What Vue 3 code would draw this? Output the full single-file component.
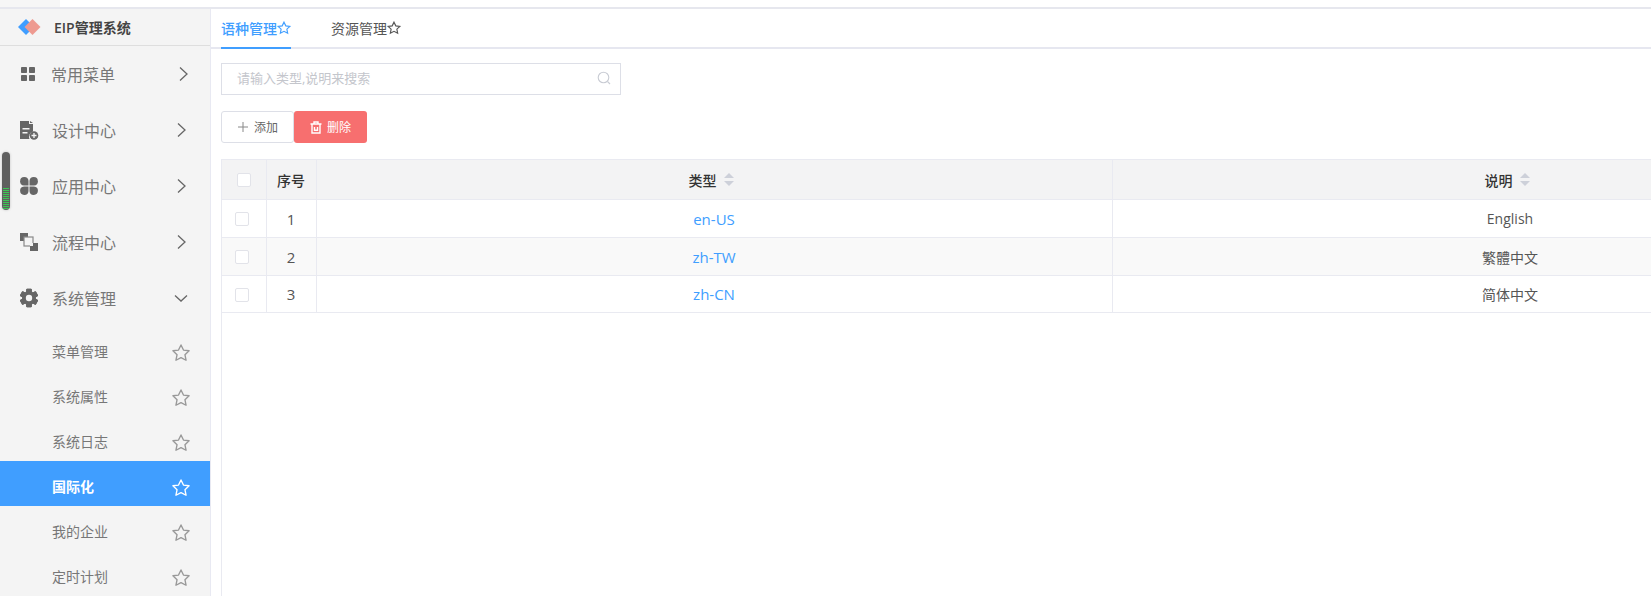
<script setup>
const menus = [
  { label: '常用菜单', icon: 'grid', open: false },
  { label: '设计中心', icon: 'doc', open: false },
  { label: '应用中心', icon: 'clover', open: false },
  { label: '流程中心', icon: 'flow', open: false },
  { label: '系统管理', icon: 'gear', open: true },
]
const subs = [
  { label: '菜单管理' }, { label: '系统属性' }, { label: '系统日志' },
  { label: '国际化', active: true }, { label: '我的企业' }, { label: '定时计划' },
]
const rows = [
  { n: 1, type: 'en-US', desc: 'English' },
  { n: 2, type: 'zh-TW', desc: '繁體中文' },
  { n: 3, type: 'zh-CN', desc: '简体中文' },
]
const star = 'M12 3.2l2.7 5.6 6.1.8-4.5 4.2 1.2 6.1L12 17l-5.5 2.9 1.2-6.1-4.5-4.2 6.1-.8z'
const teeth = [0, 60, 120, 180, 240, 300]
</script>

<template>
  <div class="page">
    <div class="topbar"><div class="topbar-left"></div></div>
    <div class="body">
      <aside class="side">
        <div class="logo">
          <svg class="logo-mark" width="24" height="18" viewBox="0 0 24 18">
            <path d="M9 1l8 8-8 8-8-8z" fill="#409eff" />
            <path d="M15.500 1l8 8-8 8-8-8z" fill="#ee9a90" />
          </svg>
          <span class="logo-text">EIP管理系统</span>
        </div>
        <div v-for="(m, i) in menus" :key="m.label" class="menu" :class="{ first: i === 0 }">
          <span class="menu-icon">
            <svg v-if="m.icon === 'grid'" width="18" height="18" viewBox="0 0 18 18" fill="#666">
              <rect x="2" y="2" width="6" height="6" rx=".8" /><rect x="10" y="2" width="6" height="6" rx=".8" />
              <rect x="2" y="10" width="6" height="6" rx=".8" /><rect x="10" y="10" width="6" height="6" rx=".8" />
            </svg>
            <svg v-else-if="m.icon === 'doc'" width="20" height="20" viewBox="0 0 20 20" fill="#666">
              <path d="M1 1h9v3h4v7.500a5.500 5.500 0 0 0-3.500 7.500H1z" />
              <path d="M11 1l3 2h-3z" />
              <rect x="3.500" y="8" width="7" height="1.500" fill="#f4f4f4" /><rect x="3.500" y="12" width="5" height="1.500" fill="#f4f4f4" />
              <circle cx="15" cy="15.500" r="4.300" /><path d="M15 13v5M12.500 15.500h5" stroke="#f4f4f4" stroke-width="1.300" />
            </svg>
            <svg v-else-if="m.icon === 'clover'" width="20" height="20" viewBox="0 0 20 20" fill="#666">
              <path d="M9.500 9.500H5a4.200 4.200 0 1 1 4.500-4.500z" />
              <path d="M10.500 9.500H15a4.200 4.200 0 1 0-4.500-4.500z" />
              <path d="M9.500 10.500H5a4.200 4.200 0 1 0 4.500 4.500z" />
              <path d="M10.500 10.500H15a4.200 4.200 0 1 1-4.500 4.500z" />
            </svg>
            <svg v-else-if="m.icon === 'flow'" width="20" height="20" viewBox="0 0 20 20">
              <rect x="1" y="1" width="8" height="8" fill="#666" />
              <rect x="5" y="5" width="9" height="9" fill="#f4f4f4" stroke="#888" stroke-width="1.200" />
              <rect x="11" y="11" width="8" height="8" fill="#666" />
              <rect x="11" y="11" width="3" height="3" fill="#f4f4f4" />
            </svg>
            <svg v-else width="20" height="20" viewBox="0 0 20 20">
              <g fill="#666">
                <rect v-for="t in teeth" :key="t" x="7.200" y="0.800" width="5.600" height="18.400" rx="1" :transform="`rotate(${t} 10 10)`" />
                <circle cx="10" cy="10" r="7" />
              </g>
              <circle cx="10" cy="10" r="3.200" fill="#f4f4f4" />
            </svg>
          </span>
          <span class="menu-label">{{ m.label }}</span>
          <svg v-if="m.open" class="chev" width="14" height="14" viewBox="0 0 14 14">
            <path d="M1 4.500l6 5.500 6-5.500" fill="none" stroke="#666" stroke-width="1.300" />
          </svg>
          <svg v-else class="chev" width="14" height="14" viewBox="0 0 14 14">
            <path d="M4 .5l7 6.500-7 6.500" fill="none" stroke="#666" stroke-width="1.300" />
          </svg>
        </div>
        <div v-for="s in subs" :key="s.label" class="sub" :class="{ active: s.active }">
          <span>{{ s.label }}</span>
          <svg class="sub-star" width="22" height="22" viewBox="0 0 24 24">
            <path :d="star" fill="none" stroke="currentColor" stroke-width="1.500" stroke-linejoin="round" />
          </svg>
        </div>
      </aside>

      <main class="main">
        <nav class="tabs">
          <div class="tab on">语种管理<svg class="tab-star" width="16" height="16" viewBox="0 0 24 24"><path :d="star" fill="none" stroke="currentColor" stroke-width="1.700" /></svg></div>
          <div class="tab">资源管理<svg class="tab-star" width="16" height="16" viewBox="0 0 24 24"><path :d="star" fill="none" stroke="currentColor" stroke-width="1.700" /></svg></div>
        </nav>
        <div class="content">
          <div class="search">
            <span>请输入类型,说明来搜索</span>
            <svg width="14" height="14" viewBox="0 0 14 14">
              <circle cx="6.500" cy="6.500" r="5.300" fill="none" stroke="#c9ccd4" stroke-width="1.100" />
              <path d="M10.500 10.500l2.500 2.500" stroke="#c9ccd4" stroke-width="1.100" />
            </svg>
          </div>
          <div class="actions">
            <button class="btn add">
              <svg width="12" height="12" viewBox="0 0 12 12"><path d="M6 1v10M1 6h10" stroke="#888" stroke-width="1" /></svg>
              添加
            </button>
            <button class="btn del">
              <svg width="12" height="13" viewBox="0 0 12 13"><path d="M.5 3h11M4 3V1h4v2M2 3v9h8V3M4.500 6v3.200h3V6" fill="none" stroke="#fff" stroke-width="1.400" /></svg>
              删除
            </button>
          </div>
          <div class="table-wrap">
            <table class="table">
              <colgroup><col class="c1" /><col class="c2" /><col class="c3" /><col class="c4" /></colgroup>
              <thead>
                <tr>
                  <th><i class="check head-check"></i></th>
                  <th>序号</th>
                  <th><span class="th-inner">类型<i class="sort"></i></span></th>
                  <th><span class="th-inner">说明<i class="sort"></i></span></th>
                </tr>
              </thead>
              <tbody>
                <tr v-for="r in rows" :key="r.n">
                  <td><i class="check"></i></td>
                  <td class="num">{{ r.n }}</td>
                  <td class="link">{{ r.type }}</td>
                  <td>{{ r.desc }}</td>
                </tr>
              </tbody>
            </table>
          </div>
        </div>
      </main>
    </div>
    <div class="meter"><div class="meter-fill"></div></div>
  </div>
</template>

<style>
html, body { margin: 0; overflow: hidden; background: #fff; }
</style>

<style scoped>
.page {
  position: relative;
  width: 1651px;
  height: 596px;
  overflow: hidden;
  display: flex;
  flex-direction: column;
  font-family: "Open Sans", "Noto Sans CJK SC", sans-serif;
  color: #555;
}
.topbar { height: 7px; flex: none; background: #fff; border-bottom: 2px solid #e6e7ee; }
.topbar-left { width: 60px; height: 7px; background: #f6f6f6; }
.body { flex: 1; display: flex; min-height: 0; }

.side { width: 210px; flex: none; background: #f4f4f4; border-right: 1px solid #e8e9f2; overflow: hidden; }
.logo { height: 36px; display: flex; align-items: center; border-bottom: 1px solid #dedede; padding-left: 17px; }
.logo-text { margin-left: 13px; font-size: 14px; font-weight: 600; color: #444; }
.menu { height: 56px; display: flex; align-items: center; padding-left: 19px; color: #666; box-sizing: border-box; }
.menu.first { padding-left: 18px; padding-bottom: 1px; }
.menu-icon { width: 20px; height: 20px; display: flex; align-items: center; justify-content: center; flex: none; }
.menu-label { margin-left: 13px; font-size: 16px; flex: 1; color: #777; }
.chev { margin-right: 22px; }
.menu.first .chev { margin-right: 20px; }
.sub { height: 45px; box-sizing: border-box; padding: 5px 18px 0 52px; display: flex; align-items: center; justify-content: space-between; font-size: 14px; color: #777; }
.sub-star { color: #999; margin-top: 4px; }
.sub.active { background: #409eff; color: #fff; font-weight: 700; }
.sub.active .sub-star { color: #fff; }

.main { flex: 1; min-width: 0; display: flex; flex-direction: column; }
.tabs { height: 38px; flex: none; display: flex; gap: 40px; padding-left: 10px; border-bottom: 2px solid #e6e7f0; }
.tab { height: 38px; box-sizing: content-box; display: flex; align-items: center; font-size: 14px; color: #555; margin-bottom: -2px; border-bottom: 2px solid transparent; }
.tab.on { color: #409eff; font-weight: 500; border-bottom-color: #409eff; }
.tab-star { margin: 0 -1px; }
.content { flex: 1; padding: 14px 0 0 10px; display: flex; flex-direction: column; min-height: 0; }
.search { width: 400px; height: 32px; box-sizing: border-box; border: 1px solid #dddfe7; display: flex; align-items: center; justify-content: space-between; padding: 0 9px 3px 15px; font-size: 13px; color: #c4c6cc; }
.actions { display: flex; margin-top: 16px; }
.btn { height: 32px; box-sizing: border-box; width: 73px; display: flex; align-items: center; justify-content: center; gap: 5px; font: inherit; font-size: 12px; border-radius: 3px; padding: 0; }
.add { border: 1px solid #dddfe7; background: #fff; color: #666; }
.del { border: 0; background: #f76f6f; color: #fff; }
.table-wrap { margin-top: 16px; flex: 1; width: 1700px; border-left: 1px solid #e9eaf1; min-height: 0; }
.table { table-layout: fixed; border-collapse: collapse; width: 1640px; }
.c1 { width: 44px; } .c2 { width: 50px; } .c3 { width: 796px; } .c4 { width: 796px; }
.table th, .table td { border: 1px solid #e9eaf1; border-left: 0; padding: 0; text-align: center; font-size: 14px; height: 38px; box-sizing: border-box; }
.table th { height: 40px; background: #f3f3f4; font-size: 14px; font-weight: 500; color: #333; }
.table tbody tr:nth-child(2) td { background: #f9f9f9; }
.table tbody tr:last-child td { height: 37px; }
.table tbody tr:last-child .check { margin-top: 1px; }
.table td.link { color: #409eff; font-size: 15px; }
.table td.num { font-size: 15px; }
.check { display: block; box-sizing: border-box; width: 14px; height: 14px; border: 1px solid #e2e3e9; border-radius: 2px; background: #fff; margin: 0 auto 0 13px; }
.head-check { margin-left: 15px; }
.th-inner { display: inline-flex; align-items: center; gap: 7px; position: relative; left: -3px; }
.sort { display: inline-block; width: 10px; height: 13px; position: relative; }
.sort::before, .sort::after { content: ""; position: absolute; left: 0; border-left: 5px solid transparent; border-right: 5px solid transparent; }
.sort::before { top: 0; border-bottom: 5.500px solid #cdd0d9; }
.sort::after { bottom: 0; border-top: 5.500px solid #cdd0d9; }

.meter { position: absolute; left: 2px; top: 152px; width: 8px; height: 58px; border-radius: 4px; background: #5f5f5f; overflow: hidden; box-shadow: 0 0 2px 1px #ddd; }
.meter-fill { position: absolute; left: 1px; right: 1px; bottom: 1px; height: 21px; background: repeating-linear-gradient(#3cc754 0 1px, #5f5f5f 1px 2px); }
</style>
